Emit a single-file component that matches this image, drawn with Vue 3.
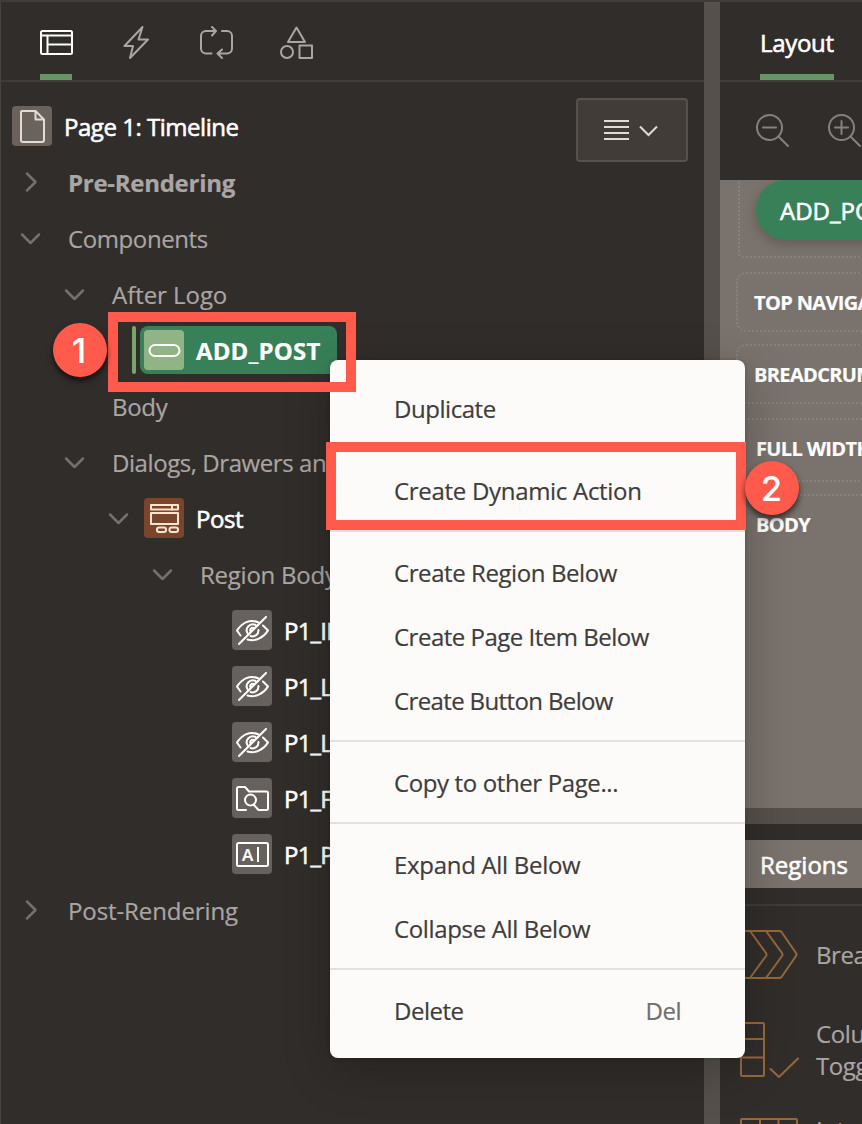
<script setup>
const rows = [
  { label: 'Page 1: Timeline', indent: 12, icon: 'page', cls: 'strong page', track: -0.47 },
  { label: 'Pre-Rendering', indent: 20, arrow: 'right', cls: 'bold', track: -0.28 },
  { label: 'Components', indent: 20, arrow: 'down', track: -0.4 },
  { label: 'After Logo', indent: 64, arrow: 'down', track: -0.05 },
  { label: 'ADD_POST', indent: 132, icon: 'button', cls: 'selected', track: 0.15 },
  { label: 'Body', indent: 64, arrow: 'none', track: -0.3 },
  { label: 'Dialogs, Drawers and Popups', indent: 64, arrow: 'down', track: -0.43 },
  { label: 'Post', indent: 108, arrow: 'down', icon: 'region', cls: 'strong post', track: -0.4 },
  { label: 'Region Body', indent: 152, arrow: 'down', track: -0.25 },
  { label: 'P1_ID', indent: 232, icon: 'hidden', cls: 'strong', track: -0.8 },
  { label: 'P1_LAT', indent: 232, icon: 'hidden', cls: 'strong', track: -0.8 },
  { label: 'P1_LON', indent: 232, icon: 'hidden', cls: 'strong', track: -0.8 },
  { label: 'P1_FILE', indent: 232, icon: 'folder', cls: 'strong', track: -0.8 },
  { label: 'P1_POST', indent: 232, icon: 'text', cls: 'strong', track: -0.8 },
  { label: 'Post-Rendering', indent: 20, arrow: 'right', track: -0.1 }
]
const groups = [
  [{ label: 'Duplicate', track: -0.45 }],
  [{ label: 'Create Dynamic Action', track: -0.3 }],
  [
    { label: 'Create Region Below', track: -0.42 },
    { label: 'Create Page Item Below', track: -0.5 },
    { label: 'Create Button Below', track: -0.63 }
  ],
  [{ label: 'Copy to other Page...', track: -0.38 }],
  [{ label: 'Expand All Below', track: -0.3 }, { label: 'Collapse All Below', track: -0.35 }],
  [{ label: 'Delete', key: 'Del', track: -0.5 }]
]
</script>

<template>
  <div class="screen">
    <section class="tree-pane">
      <nav class="tabs">
        <span class="tab active">
          <svg width="34" height="34" viewBox="0 0 34 34"><g fill="none" stroke="currentColor" stroke-width="2"><rect x="1" y="5" width="31" height="23" rx="1.5" /><path d="M1 9.500h31M7.500 9.500V28M7.500 18.500H32" /></g></svg>
        </span>
        <span class="tab">
          <svg width="34" height="34" viewBox="0 0 34 34"><path d="M22.500 1 L4.500 20 H13 L10 32 L28 13.500 H18.500 Z" fill="none" stroke="currentColor" stroke-width="2" stroke-linejoin="round" /></svg>
        </span>
        <span class="tab">
          <svg width="34" height="34" viewBox="0 0 34 34"><path d="M11.500 27.500H6a5 5 0 0 1-5-5V10a5 5 0 0 1 5-5h9M12 1l4 4-4 4.500M22 5h5a5 5 0 0 1 5 5v12.500a5 5 0 0 1-5 5H18M22 23.500l-4.500 4 4.500 4.500" fill="none" stroke="currentColor" stroke-width="2" stroke-linecap="round" stroke-linejoin="round" /></svg>
        </span>
        <span class="tab">
          <svg width="34" height="34" viewBox="0 0 34 34"><g fill="none" stroke="currentColor" stroke-width="2" stroke-linejoin="round"><path d="M16.500 1.500 25 16H8Z" /><circle cx="7" cy="26" r="6" /><rect x="19.500" y="19.500" width="12.500" height="12.500" /></g></svg>
        </span>
      </nav>

      <div class="tree">
        <div v-for="row in rows" :key="row.label" class="row" :class="row.cls" :style="{ paddingLeft: row.indent - 1 + 'px' }">
          <i v-if="row.cls === 'selected'" class="marker"></i>
          <span v-if="row.arrow" class="arrow">
            <svg v-if="row.arrow !== 'none'" width="22" height="22" viewBox="0 0 22 22">
              <path :d="row.arrow === 'down' ? 'M2 7.500 10.500 16l8.500-8.500' : 'M7 2.500 15.500 11 7 19.500'" fill="none" stroke="currentColor" stroke-width="2.500" stroke-linecap="round" stroke-linejoin="round" />
            </svg>
          </span>
          <span class="node">
            <span v-if="row.icon" class="icon" :class="row.icon">
              <svg width="40" height="40" viewBox="0 0 40 40" fill="none" stroke="currentColor" stroke-width="2" stroke-linejoin="round" stroke-linecap="round">
                <path v-if="row.icon === 'page'" d="M10 5h13.500l8.500 8.500V34a2 2 0 0 1-2 2H11a2 2 0 0 1-2-2V6a1 1 0 0 1 1-1ZM23.500 5v8.500H32" />
                <rect v-else-if="row.icon === 'button'" x="5.500" y="15" width="30" height="11" rx="5.500" />
                <g v-else-if="row.icon === 'region'">
                  <rect x="7" y="7" width="27" height="4.500" /><path d="M28 7v4.500" /><rect x="7" y="15" width="27" height="11" />
                  <rect x="13" y="29.500" width="9" height="4.500" rx="2" /><rect x="25.500" y="29.500" width="8.500" height="4.500" rx="2" />
                </g>
                <g v-else-if="row.icon === 'hidden'">
                  <path d="M8.500 25.500 5 20.500C10 13 18 8.500 26.500 12.500M31 15.500l5 5C32 27 24 32 15.500 29.500" />
                  <path d="M16 24A6 6 0 0 1 23.500 15M26.500 20a6 6 0 0 1-8 6M18.500 21.500a2.500 2.500 0 0 1 3-3.500M34 7 7 34" />
                </g>
                <g v-else-if="row.icon === 'folder'">
                  <path d="M14 32H6.500a1.500 1.500 0 0 1-1.500-1.500v-20A1.500 1.500 0 0 1 6.500 9H13l4 4.500H34.500A1.500 1.500 0 0 1 36 15v15.500a1.500 1.500 0 0 1-1.500 1.500h-8L21.500 26.500" /><circle cx="18.500" cy="22" r="5.500" />
                </g>
                <rect v-else x="5" y="9" width="31" height="23" rx="1.500" />
              </svg>
              <b v-if="row.icon === 'text'" class="glyph">A</b><i v-if="row.icon === 'text'" class="caret"></i>
            </span>
            <span class="label" :style="{ letterSpacing: row.track + 'px' }">{{ row.label }}</span>
          </span>
        </div>
        <button class="view-menu">
          <svg width="54" height="24" viewBox="0 0 54 24" fill="none" stroke="currentColor" stroke-width="2"><path d="M0 3h25M0 9h25M0 15h25M0 21h25M36 8.500l8.500 8.500L53 8.500" /></svg>
        </button>
      </div>
    </section>

    <div class="splitter"></div>

    <section class="layout-pane">
      <header class="tabs right"><span class="layout-tab">Layout</span></header>
      <div class="zoom-bar">
        <svg v-for="n in 2" :key="n" width="34" height="34" viewBox="0 0 34 34" fill="none" stroke="currentColor" stroke-width="2" stroke-linecap="round">
          <circle cx="13.500" cy="13.500" r="12.500" /><path d="M22.500 22.500 32 32M7 13.500h13" /><path v-if="n === 2" d="M13.500 7v13" />
        </svg>
      </div>
      <div class="canvas">
        <div class="slot first"><span class="pill">ADD_POST</span></div>
        <div class="slot top">TOP NAVIGATION</div>
        <div class="slot crumb">BREADCRUMB BAR</div>
        <div class="slot full">FULL WIDTH CONTENT</div>
        <div class="slot main">BODY</div>
      </div>
      <div class="h-splitter"></div>
      <div class="gallery">
        <div class="gallery-tab">Regions</div>
        <div class="gallery-list">
          <div class="card">
            <svg width="60" height="52" viewBox="0 0 60 52"><path d="M1 2h38a3 3 0 0 1 2.500 1L56 24q1 1.500 0 3L41.500 48a3 3 0 0 1-2.500 1H1M10 2l16 22q1 1.500 0 3L10 49M26 2l16 22q1 1.500 0 3L26 49" /></svg>
            <span>Breadcrumb</span>
          </div>
          <div class="card two">
            <svg width="60" height="58" viewBox="0 0 60 58"><rect x="1" y="2" width="23" height="53" rx="1" /><path d="M1 18h23M1 36.500h23M30.500 48l8.500 8L58 37.500" /></svg>
            <span>Column<br />Toggle Report</span>
          </div>
          <div class="card three">
            <svg width="60" height="58" viewBox="0 0 60 58"><rect x="1" y="2" width="56" height="54" rx="1" /><path d="M20 2v54M38.500 2v54M1 18h56" /></svg>
            <span>Interactive<br />Grid</span>
          </div>
        </div>
      </div>
    </section>

    <div class="menu">
      <div v-for="(group, g) in groups" :key="g" class="group">
        <div v-for="item in group" :key="item.label" class="menu-item">
          <span :style="{ letterSpacing: item.track + 'px' }">{{ item.label }}</span><kbd v-if="item.key">{{ item.key }}</kbd>
        </div>
      </div>
    </div>

    <div class="frame one"></div>
    <div class="frame two"></div>
    <div class="step s1">1</div>
    <div class="step s2">2</div>
  </div>
</template>

<style>
html, body { background: #312d2a; overflow: hidden; }
</style>

<style scoped>
* { box-sizing: border-box; }
.screen {
  position: relative; width: 862px; height: 1124px; overflow: hidden; display: flex;
  background: #312d2a; border-top: 2px solid #403b38; color: #a9a6a4;
  font-family: "Open Sans", "Noto Sans", sans-serif; font-size: 24px; line-height: 32px; white-space: nowrap;
  -webkit-text-stroke: .2px currentColor;
}
.tree-pane { width: 704px; border-left: 1px solid #46423e; overflow: hidden; }
.tabs { height: 80px; border-bottom: 2px solid #403b38; display: flex; padding-left: 39px; gap: 46px; }
.tab { width: 34px; height: 78px; padding-top: 24px; position: relative; }
.tab svg { display: block; }
.tab.active { color: #fff; }
.tab.active::after { content: ""; position: absolute; left: 0; bottom: 0; width: 32px; height: 6px; background: #6b9464; }
.tree { position: relative; padding-top: 16px; }
.row { height: 56px; display: flex; align-items: center; }
.arrow { width: 48px; height: 22px; color: #73706d; display: flex; }
.node { display: flex; align-items: center; }
.label { position: relative; top: 1px; }
.strong .label { color: #fff; margin-left: 12px; -webkit-text-stroke: .6px #fff; }
.bold .label { font-weight: 700; }
.post .arrow { width: 36px; }
.icon { position: relative; width: 40px; height: 40px; border-radius: 4px; background: #67615e; color: #fff; flex: none; }
.icon svg { display: block; }
.icon.page { color: #dedcda; background: #6b625c; }
.icon.region { background: #7b452b; color: #f8e6cf; }
.icon.button { background: #91b487; margin-left: 4px; }
.glyph { position: absolute; left: 10px; top: 11px; font: 600 17px/20px "Open Sans", sans-serif; }
.caret { position: absolute; left: 25px; top: 13px; width: 2px; height: 15px; background: #fff; }
.marker { width: 4px; height: 48px; border-radius: 2px; background: #7ba36f; margin-right: 4px; }
.selected .node { width: 197px; height: 48px; border-radius: 8px; background: #388058; }
.selected .label { margin-left: 12px; font-weight: 700; color: #fff; }
.view-menu {
  position: absolute; top: 16px; right: 16px; width: 112px; height: 64px; border: 2px solid #57524d;
  border-radius: 4px; background: #413c38; color: #dedbd8; padding: 0 0 0 26px; display: flex; align-items: center;
}
.splitter { width: 16px; background: #55504b; flex: none; }
.layout-pane { width: 142px; overflow: hidden; display: flex; flex-direction: column; }
.tabs.right { padding-left: 40px; }
.layout-tab { width: 74px; height: 78px; padding-top: 25px; border-bottom: 6px solid #6b9464; color: #fff; letter-spacing: -.3px; -webkit-text-stroke: .6px #fff; }
.zoom-bar { height: 98px; flex: none; display: flex; gap: 38px; padding: 32px 0 0 36px; color: #85817e; }
.zoom-bar svg { flex: none; }
.canvas { height: 628px; flex: none; background: #7a726c; overflow: hidden; color: #fff; font-size: 20px; font-weight: 700; letter-spacing: -.65px; }
.slot { width: 300px; margin-left: 16px; border: 2px dotted #88827d; border-radius: 10px; padding-left: 16px; line-height: 57px; height: 60px; }
.slot.first { margin-left: 18px; height: 78px; border-top: 0; border-radius: 0 0 0 6px; }
.pill { display: block; width: 180px; height: 60px; border-radius: 30px; background: #388058; font-size: 24px; font-weight: 400; letter-spacing: 0; padding-left: 24px; line-height: 62px; box-shadow: 0 4px 12px #0003; -webkit-text-stroke: .6px #fff; }
.top { margin-top: 14px; }
.crumb { margin-top: 12px; }
.full { margin: 14px 0 0 18px; height: 64px; }
.main { margin: 12px 0 0 18px; height: 330px; }
.h-splitter { height: 16px; background: #55504b; flex: none; }
.gallery { padding-top: 16px; }
.gallery-tab { height: 48px; background: #7a726c; color: #fff; padding-left: 40px; line-height: 50px; -webkit-text-stroke: .6px #fff; }
.gallery-list { margin-top: 16px; border-top: 2px solid #403b38; padding: 23px 0 0 20px; }
.card { display: flex; gap: 16px; align-items: center; height: 52px; margin-bottom: 40px; }
.card.two, .card.three { height: 58px; margin-bottom: 38px; }
.card svg { flex: none; fill: none; stroke: #96693b; stroke-width: 2; stroke-linejoin: round; stroke-linecap: round; }
.card span { letter-spacing: -.4px; }
.menu {
  position: absolute; left: 330px; top: 358px; width: 415px; height: 698px; border-radius: 8px; padding: 16px 0;
  background: #fcfbfa; color: #403c3a; box-shadow: 0 12px 48px #0000003d, 0 0 4px #0003;
}
.group + .group { border-top: 2px solid #e3e1df; margin-top: 8px; padding-top: 8px; }
.menu-item { height: 64px; padding: 1px 64px 0; display: flex; align-items: center; justify-content: space-between; }
kbd { font: inherit; color: #716e6c; letter-spacing: -.5px; }
.frame { position: absolute; border: 10px solid #ff5a4b; }
.frame.one { left: 108px; top: 310px; width: 248px; height: 80px; }
.frame.two { left: 326px; top: 440px; width: 420px; height: 88px; }
.step {
  position: absolute; width: 54px; height: 54px; border-radius: 50%; background: #ff5a4b; color: #fff;
  font: 500 34px/55px Inter, "Liberation Sans", sans-serif; text-align: center; box-shadow: 0 4px 6px #000000a0;
}
.s1 { left: 53px; top: 321px; padding-right: 2px; }
.s2 { left: 745px; top: 459px; padding-right: 1px; }
</style>
